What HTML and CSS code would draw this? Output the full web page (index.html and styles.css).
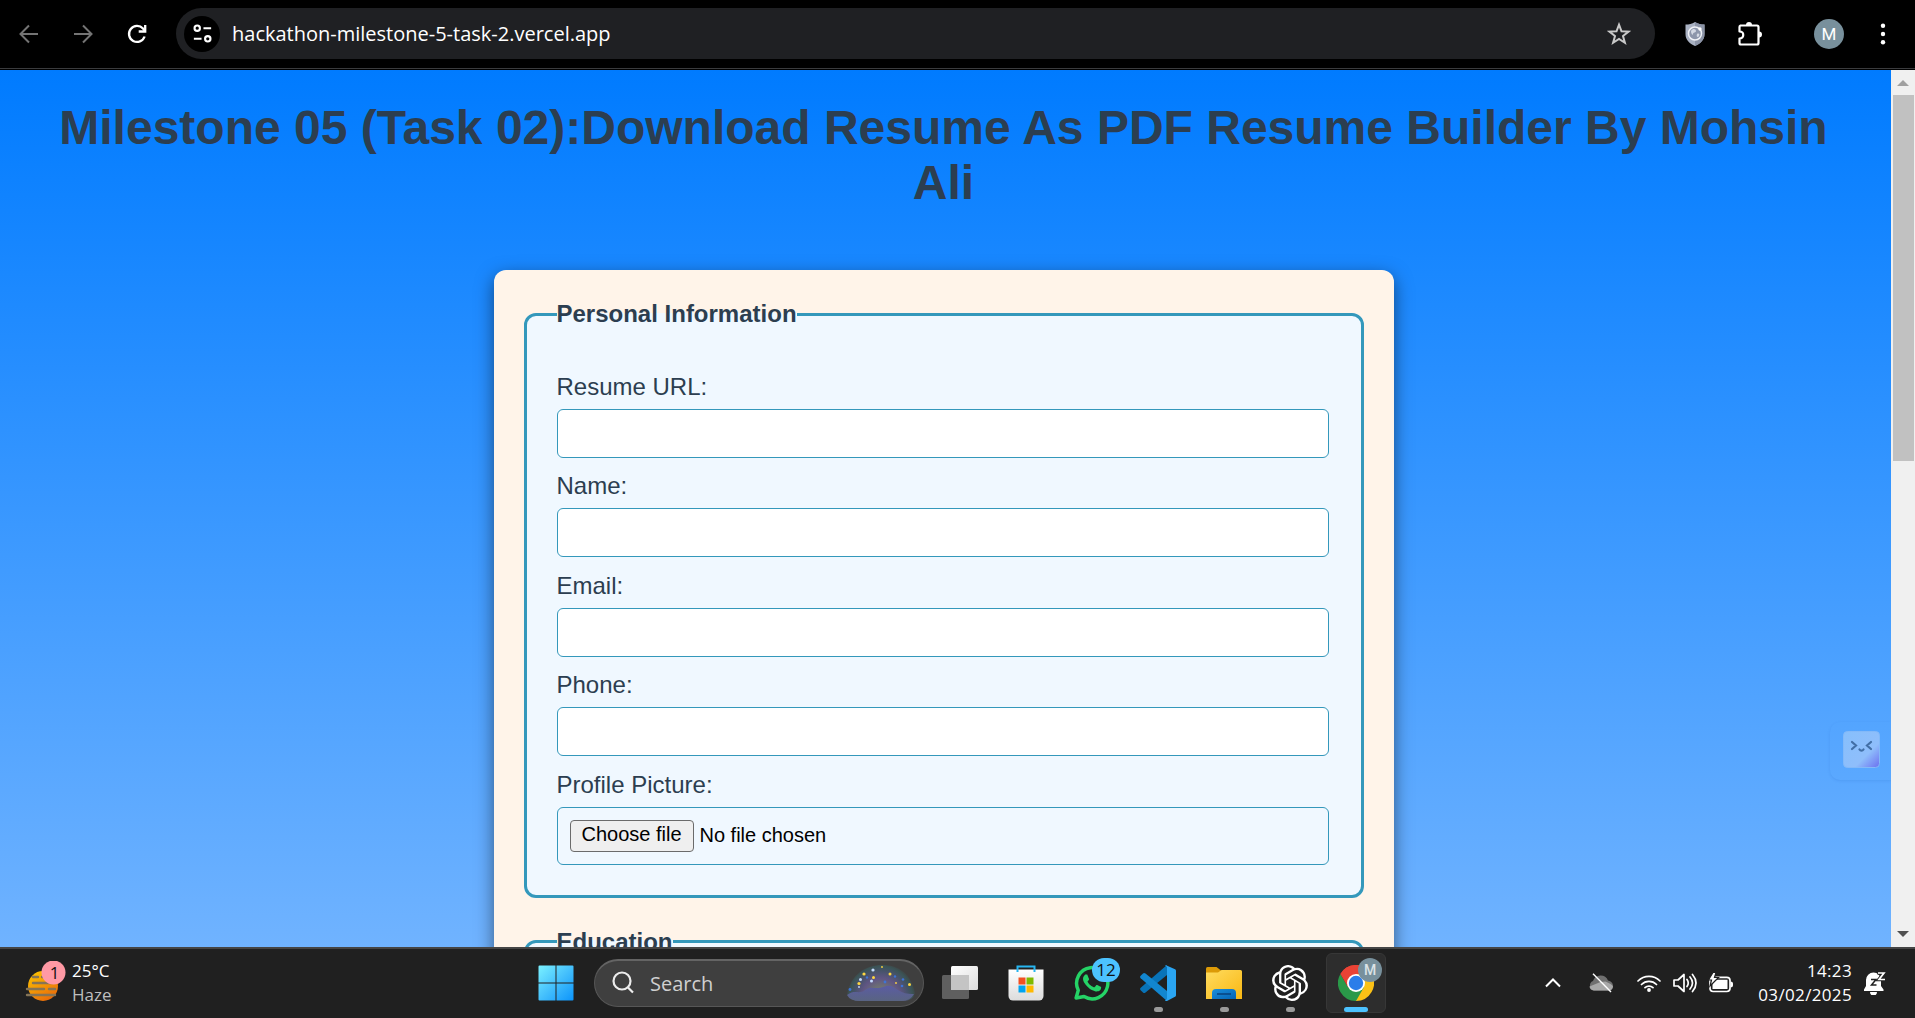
FILE: index.html
```html
<!DOCTYPE html>
<html lang="en">
<head>
<meta charset="utf-8">
<title>Resume Builder</title>
<link rel="stylesheet" href="styles.css">
</head>
<body>
<div class="screen">
  <header class="toolbar">
    <svg class="nav-icon dim" viewBox="0 0 24 24"><path d="M21 12H4M12 3.5 3.5 12l8.5 8.5"/></svg>
    <svg class="nav-icon dim" viewBox="0 0 24 24"><path d="M3 12h17M12 3.5 20.500 12 12 20.500"/></svg>
    <svg class="nav-icon reload" viewBox="0 0 24 24"><path d="M19.600 14.500A8 8 0 1 1 18 6.600L20 9"/><path d="M20.200 3v6.500h-6.500"/></svg>
    <div class="omnibox">
      <span class="site-info"><svg viewBox="0 0 24 24"><circle cx="6.500" cy="6.500" r="2.800"/><path d="M13 6.500h8M3 17.500h8"/><circle cx="17.500" cy="17.500" r="2.800"/></svg></span>
      <span class="url">hackathon-milestone-5-task-2.vercel.app</span>
      <svg class="star" viewBox="0 0 24 24"><path d="m12 2.700 2.500 6.600 7 .3-5.500 4.400 1.900 6.800-5.900-3.900-5.900 3.900L8 14 2.500 9.600l7-.3z"/></svg>
    </div>
    <svg class="shield" viewBox="0 0 20 24"><path d="M10 0c3 2 6 2.500 9.500 2.500V12c0 6-4 9.500-9.500 12C4.500 21.500.5 18 .5 12V2.500C4 2.500 7 2 10 0z" fill="#a9b1c2"/><path d="M10 0c3 2 6 2.500 9.500 2.500V12c0 6-4 9.500-9.500 12z" fill="#8b93a6"/><circle cx="10" cy="11.500" r="6.500" fill="#8d96ab" stroke="#f0f2f7" stroke-width="1.500"/><path d="M6 9c2-3 5-2 5 0s-3 1-3 3-2 0-2-3zm6 3c2-1 3 0 2 2s-3 1-2-2z" fill="#d4d9e4"/><circle cx="15" cy="7" r="1.700" fill="#fff"/></svg>
    <svg class="puzzle" viewBox="0 0 26 26"><path d="M3.500 4.500h16.500a1.500 1.500 0 0 1 1.500 1.500v16a1.500 1.500 0 0 1-1.500 1.500H4A1.500 1.500 0 0 1 2.500 22v-4.500c5 0 5-7 0-7V6a1.500 1.500 0 0 1 1-1.500z" fill="none" stroke="#fff" stroke-width="2.200" stroke-linejoin="round"/><path d="M9 4a3 3 0 0 1 6 0zM22 10.500a3 3 0 0 1 0 6z" fill="#fff"/></svg>
    <span class="avatar">M</span>
    <svg class="dots" viewBox="0 0 6 24"><circle cx="3" cy="3.700" r="2.200"/><circle cx="3" cy="12" r="2.200"/><circle cx="3" cy="20.300" r="2.200"/></svg>
  </header>

  <div class="viewport">
    <main class="page">
      <h1 class="title">Milestone 05 (Task 02):Download Resume As PDF Resume Builder By Mohsin Ali</h1>
      <form class="card">
        <fieldset class="group">
          <legend>Personal Information</legend>
          <div class="field"><label for="url">Resume URL:</label><input id="url" type="text"></div>
          <div class="field"><label for="name">Name:</label><input id="name" type="text"></div>
          <div class="field"><label for="email">Email:</label><input id="email" type="email"></div>
          <div class="field"><label for="phone">Phone:</label><input id="phone" type="tel"></div>
          <div class="field"><label>Profile Picture:</label>
            <div class="file"><button type="button">Choose file</button><span>No file chosen</span></div>
          </div>
        </fieldset>
        <fieldset class="group">
          <legend>Education</legend>
          <div class="field"></div>
        </fieldset>
      </form>
      <div class="widget">
        <svg viewBox="0 0 37 37"><defs><linearGradient id="face" x1="0" y1="0" x2="1" y2="1"><stop offset="0" stop-color="#86bffc"/><stop offset=".65" stop-color="#8fbefb"/><stop offset="1" stop-color="#6b6ff0"/></linearGradient></defs><rect x=".5" y=".5" width="36" height="36" rx="4" fill="url(#face)" stroke="#83b9f8"/><path d="m9 11 4 3.500L9 18M28 11l-4 3.500 4 3.500M16.500 18.500c1 1.500 3 1.500 4 0" fill="none" stroke="#426fa6" stroke-width="2.200" stroke-linecap="round"/></svg>
      </div>
    </main>
    <div class="scrollbar">
      <svg class="arrow" viewBox="0 0 12 6"><path d="M0 6 6 0l6 6z" fill="#a0a0a0"/></svg>
      <div class="thumb"></div>
      <svg class="arrow down" viewBox="0 0 12 6"><path d="m0 0 6 6 6-6z" fill="#505050"/></svg>
    </div>
  </div>

  <footer class="taskbar">
    <div class="weather">
      <svg viewBox="0 0 42 42"><defs><linearGradient id="sun" x1=".2" y1="0" x2=".8" y2="1"><stop offset="0" stop-color="#fcc200"/><stop offset="1" stop-color="#e8650a"/></linearGradient></defs><circle cx="18" cy="25" r="15" fill="url(#sun)"/><path d="M8 16h5M17 16h3M8 22h20M2 28h17M24 28h6M2 34h28" stroke="#857456" stroke-width="2.400" stroke-linecap="round"/><circle cx="28.500" cy="11.500" r="12" fill="#ff99a4"/><text x="29.500" y="17.500" text-anchor="middle" class="badge-text">1</text></svg>
      <div class="weather-text"><span>25°C</span><span class="muted">Haze</span></div>
    </div>
    <div class="app"><svg viewBox="0 0 36 36"><defs><linearGradient id="win" gradientUnits="userSpaceOnUse" x1="0" y1="0" x2="36" y2="36"><stop offset="0" stop-color="#7df3ff"/><stop offset=".5" stop-color="#45c0fc"/><stop offset="1" stop-color="#0a93fb"/></linearGradient></defs><path d="M1.500.5H17.500V17.500H.5V1.500a1 1 0 0 1 1-1zM18.500.5h16a1 1 0 0 1 1 1v16h-17zM.5 18.500h17v17h-16a1 1 0 0 1-1-1zM18.500 18.500h17v16a1 1 0 0 1-1 1h-16z" fill="url(#win)"/></svg></div>
    <div class="search">
      <svg class="lens" viewBox="0 0 24 24"><circle cx="10.500" cy="10" r="8.500"/><path d="m16.500 16.500 5 5"/></svg>
      <span>Search</span>
      <svg class="galaxy" viewBox="0 0 70 36"><defs><radialGradient id="sky" gradientUnits="userSpaceOnUse" cx="0" cy="0" r="36" gradientTransform="translate(35 33)"><stop offset="0" stop-color="#7d8668"/><stop offset=".3" stop-color="#6f7372"/><stop offset=".55" stop-color="#5f5583"/><stop offset=".75" stop-color="#47536a"/><stop offset=".88" stop-color="#3b5456"/><stop offset="1" stop-color="#3f3f3f"/></radialGradient><linearGradient id="hill" x1="0" y1="0" x2="0" y2="1"><stop offset="0" stop-color="#5b5ca2"/><stop offset="1" stop-color="#596482"/></linearGradient></defs><path d="M1 29C5 9 20 0 36 0s29 8 33 28q-2 8-12 8H14Q4 36 1 29z" fill="url(#sky)"/><path d="M1 30c8-6 12 0 18-5s10 0 18-3 10 0 15 3 8 4 16 4q-4 7-12 7H14Q4 36 1 30z" fill="url(#hill)"/><g fill="#ffd740"><circle cx="18" cy="9" r="1.600"/><circle cx="13" cy="18.500" r="1.600"/><circle cx="27.500" cy="12.500" r="1.500"/><circle cx="44" cy="9" r="1.500"/><circle cx="63.500" cy="19.500" r="1.500"/><circle cx="36" cy="2" r=".9"/><circle cx="50" cy="18" r=".9"/></g><g fill="#c5dcff"><circle cx="27" cy="5" r="1.600"/><circle cx="14.500" cy="14.500" r="1.500"/><circle cx="25.500" cy="16" r="1.500"/><circle cx="13" cy="22" r=".9"/></g><g fill="#3d74d6"><circle cx="4" cy="24.500" r="1.400"/><circle cx="21" cy="12.500" r="1.200"/><circle cx="39" cy="17" r="1.400"/><circle cx="49" cy="11.500" r="1.200"/><circle cx="57" cy="14.500" r="1.300"/><circle cx="56" cy="21" r="1.300"/></g></svg>
    </div>
    <div class="app"><svg viewBox="0 0 36 36"><defs><linearGradient id="tv" x1="0" y1="0" x2="1" y2="1"><stop offset="0" stop-color="#fff"/><stop offset="1" stop-color="#dcdcdc"/></linearGradient></defs><rect x="9" y="1" width="27" height="24" rx="1.500" fill="url(#tv)"/><rect x="0" y="10" width="27" height="24" rx="1.500" fill="#777" fill-opacity=".72"/><path d="M9 10h18v15H9z" fill="#c4c4c4"/></svg></div>
    <div class="app"><svg viewBox="0 0 36 36"><defs><linearGradient id="bag" x1="0" y1="0" x2="0" y2="1"><stop offset="0" stop-color="#fff"/><stop offset="1" stop-color="#dcdcdc"/></linearGradient></defs><path d="M.5 4.500h35V31a4.500 4.500 0 0 1-4.500 4.500H5A4.500 4.500 0 0 1 .5 31z" fill="url(#bag)"/><path d="M9.500 7V1.500h17V7" fill="none" stroke="#27b5f0" stroke-width="2"/><path d="M10.500 12.500h7v7h-7z" fill="#f25022"/><path d="M18.500 12.500h7v7h-7z" fill="#7fba00"/><path d="M10.500 20.500h7v7h-7z" fill="#00a4ef"/><path d="M18.500 20.500h7v7h-7z" fill="#ffb900"/></svg></div>
    <div class="app"><svg viewBox="0 0 24 24"><path fill="#25d366" d="M17.472 14.382c-.297-.149-1.758-.867-2.030-.967-.273-.099-.471-.148-.670.150-.197.297-.767.966-.940 1.164-.173.199-.347.223-.644.075-.297-.150-1.255-.463-2.390-1.475-.883-.788-1.480-1.761-1.653-2.059-.173-.297-.018-.458.130-.606.134-.133.298-.347.446-.520.149-.174.198-.298.298-.497.099-.198.050-.371-.025-.520-.075-.149-.669-1.612-.916-2.207-.242-.579-.487-.500-.669-.510-.173-.008-.371-.010-.570-.010-.198 0-.520.074-.792.372-.272.297-1.040 1.016-1.040 2.479 0 1.462 1.065 2.875 1.213 3.074.149.198 2.096 3.200 5.077 4.487.709.306 1.262.489 1.694.625.712.227 1.360.195 1.871.118.571-.085 1.758-.719 2.006-1.413.248-.694.248-1.289.173-1.413-.074-.124-.272-.198-.570-.347z"/><path d="M2 22l1.450-5.200A10.400 10.400 0 1 1 7.300 21z" transform="translate(-.6 0)" fill="none" stroke="#25d366" stroke-width="2.300" stroke-linejoin="round"/></svg><span class="count">12</span></div>
    <div class="app running"><svg viewBox="0 0 36 36"><path d="M27 0v10L5.500 27.500c-1 .8-1.800.6-2.500 0L.7 25.300c-.8-.8-.8-1.700 0-2.500z" fill="#0873b8"/><path d="M27 36V26L5.500 8.500C4.500 7.700 3.700 7.900 3 8.500L.7 10.700c-.8.8-.8 1.700 0 2.500z" fill="#1286cf"/><path d="M26 .3 34.500 4c1 .4 1.500 1 1.500 2v24c0 1-.5 1.600-1.500 2L27 36c-1 .3-1.500 0-2-.4l2-1.600V2l-2-1.600z" fill="#2aa5f2"/></svg></div>
    <div class="app running"><svg viewBox="0 0 36 36"><defs><linearGradient id="fold" x1="0" y1="0" x2="1" y2="1"><stop offset="0" stop-color="#ffdc60"/><stop offset="1" stop-color="#f9b712"/></linearGradient><linearGradient id="dock" x1="0" y1="0" x2="1" y2="1"><stop offset="0" stop-color="#1a8fdc"/><stop offset="1" stop-color="#0563b3"/></linearGradient></defs><path d="M0 3.500Q0 2 1.500 2h9L15 5.500V9H0z" fill="#dc9a07"/><path d="M0 7.500h12L15.500 5h19Q36 5 36 6.500V34H0z" fill="url(#fold)"/><path d="M6 34v-6q0-4 4-4h16q4 0 4 4v6z" fill="url(#dock)"/><path d="M11 29h14" stroke="#08427c" stroke-width="1.500"/></svg></div>
    <div class="app running"><svg viewBox="0 0 24 24"><path fill="#fff" d="M22.2819 9.8211a5.9847 5.9847 0 0 0-.5157-4.9108 6.0462 6.0462 0 0 0-6.5098-2.9A6.0651 6.0651 0 0 0 4.9807 4.1818a5.9847 5.9847 0 0 0-3.9977 2.9 6.0462 6.0462 0 0 0 .7427 7.0966 5.98 5.98 0 0 0 .511 4.9107 6.051 6.051 0 0 0 6.5146 2.9001A5.9847 5.9847 0 0 0 13.2599 24a6.0557 6.0557 0 0 0 5.7718-4.2058 5.9894 5.9894 0 0 0 3.9977-2.9001 6.0557 6.0557 0 0 0-.7475-7.0729zm-9.022 12.6081a4.4755 4.4755 0 0 1-2.8764-1.0408l.1419-.0804 4.7783-2.7582a.7948.7948 0 0 0 .3927-.6813v-6.7369l2.02 1.1686a.071.071 0 0 1 .038.052v5.5826a4.504 4.504 0 0 1-4.4945 4.4944zm-9.6607-4.1254a4.4708 4.4708 0 0 1-.5346-3.0137l.142.0852 4.783 2.7582a.7712.7712 0 0 0 .7806 0l5.8428-3.3685v2.3324a.0804.0804 0 0 1-.0332.0615L9.74 19.9502a4.4992 4.4992 0 0 1-6.1408-1.6464zM2.3408 7.8956a4.485 4.485 0 0 1 2.3655-1.9728V11.6a.7664.7664 0 0 0 .3879.6765l5.8144 3.3543-2.0201 1.1685a.0757.0757 0 0 1-.071 0l-4.8303-2.7865A4.504 4.504 0 0 1 2.3408 7.872zm16.5963 3.8558L13.1038 8.364 15.1192 7.2a.0757.0757 0 0 1 .071 0l4.8303 2.7913a4.4944 4.4944 0 0 1-.6765 8.1042v-5.6772a.79.79 0 0 0-.407-.667zm2.0107-3.0231l-.142-.0852-4.7735-2.7818a.7759.7759 0 0 0-.7854 0L9.409 9.2297V6.8974a.0662.0662 0 0 1 .0284-.0615l4.8303-2.7866a4.4992 4.4992 0 0 1 6.6802 4.66zM8.3065 12.863l-2.02-1.1638a.0804.0804 0 0 1-.038-.0567V6.0742a4.4992 4.4992 0 0 1 7.3757-3.4537l-.142.0805L8.704 5.459a.7948.7948 0 0 0-.3927.6813zm1.0976-2.3654l2.602-1.4998 2.6069 1.4998v2.9994l-2.5974 1.4997-2.6067-1.4997Z"/></svg></div>
    <div class="app running active"><svg viewBox="0 0 36 36"><path d="M18 18 2.400 9A18 18 0 0 1 33.600 9z" fill="#ea4335"/><path d="M18 18v-9h15.600A18 18 0 0 1 18 36z" fill="#fbc116"/><path d="M2.400 9A18 18 0 0 0 18 36l7.800-13.500L18 18l-7.800 4.500z" fill="#2a9949"/><path d="M18 9h15.600A18 18 0 0 0 2.400 9l7.800 13.500z" fill="#ea4335"/><circle cx="18" cy="18" r="9" fill="#fff"/><circle cx="18" cy="18" r="7.200" fill="#2b7de9"/></svg><span class="profile">M</span></div>
    <div class="tray">
      <svg class="chev" viewBox="0 0 16 10"><path d="m1 8.500 7-7 7 7" fill="none" stroke="#fff" stroke-width="2"/></svg>
      <svg class="cloud" viewBox="0 0 24 20"><path d="M5 17.500A5 5 0 0 1 4 8a8 8 0 0 1 15-.5q5 1 5 5.500-.5 4.500-4.500 4.500z" fill="#707070"/><path d="M4.500 17.500Q1 17 .5 13.500l11-4.500 5-.5q7 3 7.500 5-.5 4-4.500 4z" fill="#a8a8a8"/><path d="M4 .7 22 19" stroke="#fff" stroke-width="1.400"/></svg>
      <svg class="wifi" viewBox="0 0 24 18"><path d="M1 7a15.500 15.500 0 0 1 22 0M4.500 10.500a10.500 10.500 0 0 1 15 0M8 13.700a5.700 5.700 0 0 1 8 0" fill="none" stroke="#fff" stroke-width="1.700" stroke-linecap="round"/><circle cx="12" cy="16" r="1.900" fill="#fff"/></svg>
      <svg class="speaker" viewBox="0 0 24 20"><path d="M1 7h4l6-5.500v17L5 13H1zM14 6.500q2.500 3.500 0 7M17 4q5 6 0 12M19.500 1.500q7 8.500 0 17" fill="none" stroke="#fff" stroke-width="1.700" stroke-linecap="round" stroke-linejoin="round"/></svg>
      <svg class="battery" viewBox="0 0 24 20"><rect x="1" y="4.300" width="20" height="14.200" rx="3.200" fill="none" stroke="#fff" stroke-width="1.700"/><path d="M3.500 6.800h15v9.200h-15zM21.500 8.500q2.500 0 2.500 2v2q0 2-2.500 2z" fill="#fff"/><path d="M4 -.5-.5 7h3l-1.500 6L9.500 4.500h-4L7 -.5z" fill="#fff" stroke="#202020" stroke-width="1.200"/></svg>
      <div class="clock"><span>14:23</span><span>03/02/2025</span></div>
      <svg class="bell" viewBox="0 0 22 24"><path d="M0 18.500 2 15V9a7 7 0 0 1 15 0v6l2.500 3.500V20H0zM6 21h7a3.500 3.500 0 0 1-7 0z" fill="#fff"/><path d="M13.500 2h6.500l-5 6.500h6" fill="none" stroke="#202020" stroke-width="3.600"/><path d="M14 2h6l-5 6.500h6" fill="none" stroke="#fff" stroke-width="1.700"/><path d="M7 8.500h5L7.500 14h5" fill="none" stroke="#202020" stroke-width="1.500"/></svg>
    </div>
  </footer>
</div>
</body>
</html>
```
FILE: styles.css
```css
* { box-sizing: border-box; }
body {
  margin: 0;
  font-family: "Liberation Sans", Arial, sans-serif;
  overflow: hidden;
}
svg { display: block; flex: none; }
.screen {
  width: 1915px;
  height: 1018px;
  display: flex;
  flex-direction: column;
}

/* Browser toolbar */
.toolbar {
  height: 70px;
  flex: none;
  display: flex;
  align-items: center;
  padding: 0 0 2px 17px;
  background: #000;
  border-bottom: 1px solid #000;
  box-shadow: inset 0 -1px #3a3b3d;
  font-family: "Open Sans", sans-serif;
}
.nav-icon {
  width: 24px;
  height: 24px;
  margin-right: 30px;
  fill: none;
  stroke: #fff;
  stroke-width: 2.3;
}
.nav-icon.dim { stroke: #747474; stroke-width: 2; }
.nav-icon.reload { margin-right: 27px; }
.omnibox {
  width: 1479px;
  height: 51px;
  flex: none;
  display: flex;
  align-items: center;
  padding: 0 24px 0 8px;
  border-radius: 26px;
  background: #1f2023;
}
.site-info {
  width: 36px;
  height: 36px;
  display: grid;
  place-items: center;
  border-radius: 50%;
  background: #000;
}
.site-info svg {
  width: 23px;
  height: 23px;
  fill: none;
  stroke: #fff;
  stroke-width: 2.2;
}
.url {
  margin-left: 12px;
  font-size: 20px;
  line-height: 28px;
  color: #fff;
}
.star {
  width: 24px;
  height: 24px;
  margin-left: auto;
  fill: none;
  stroke: #c9c9c9;
  stroke-width: 2;
}
.shield { width: 20px; height: 24px; margin-left: 30px; }
.puzzle { width: 26px; height: 26px; margin-left: 32px; }
.avatar {
  width: 30px;
  height: 30px;
  margin-left: 51px;
  border-radius: 50%;
  background: #78909c;
  color: #fff;
  font: 400 17px/31px Roboto, sans-serif;
  text-align: center;
}
.dots { width: 6px; height: 24px; margin-left: 36px; fill: #fff; }

/* Page */
.viewport { height: 877px; flex: none; display: flex; }
.page {
  position: relative;
  width: 1891px;
  padding-right: 4px;
  overflow: hidden;
  background: linear-gradient(#007bff, #70b3ff);
  color: #2c3e50;
}
.title {
  margin: 30px 30px 60px;
  font-size: 48px;
  line-height: 55px;
  text-align: center;
}
.card {
  width: 900px;
  margin: 0 auto;
  padding: 30px;
  border-radius: 12px;
  background: #fff4e9;
  box-shadow: 0 6px 18px rgba(0, 0, 0, 0.5);
}
.group {
  margin: 0 0 30px;
  padding: 30px;
  border: 3px solid #3498bb;
  border-radius: 12px;
  background: #f0f8ff;
}
.group legend {
  padding: 0;
  font-size: 24px;
  line-height: 28px;
  font-weight: bold;
}
.field {
  display: flex;
  flex-direction: column;
  padding-top: 14px;
  margin-bottom: 0.4px;
  font-size: 24px;
}
.group legend + .field { padding-top: 15px; }
.field:last-child { margin-bottom: 0; }
.field label { line-height: 27px; margin-bottom: 9px; }
.field input, .file {
  width: 772px;
  height: 49px;
  padding: 12px;
  border: 1px solid #3498bb;
  border-radius: 6px;
  background: #fff;
}
.file {
  height: 58px;
  display: flex;
  align-items: center;
  gap: 6px;
  background: transparent;
  color: #000;
  font-size: 20px;
}
.file button {
  width: 124px;
  height: 32px;
  padding: 0 0 2px;
  border: 1px solid #6b6b6b;
  border-radius: 4px;
  background: #efefef;
  color: #000;
  font: 20px "Liberation Sans", Arial, sans-serif;
}
.widget {
  position: absolute;
  right: 0;
  top: 652px;
  width: 61px;
  height: 58px;
  padding: 9px 0 0 13px;
  border-radius: 10px 0 0 10px;
  box-shadow: 0 1px 3px rgba(30, 90, 180, 0.15);
}
.widget svg { width: 37px; height: 37px; }

.scrollbar {
  width: 24px;
  display: flex;
  flex-direction: column;
  align-items: center;
  padding: 10px 0;
  background: #f0f0f0;
}
.arrow { width: 12px; height: 6px; }
.thumb { width: 21px; height: 366px; margin-top: 9px; background: #c1c1c1; }
.arrow.down { margin-top: auto; }

/* Taskbar */
.taskbar {
  height: 71px;
  flex: none;
  display: flex;
  align-items: center;
  padding-bottom: 2px;
  border-top: 2px solid #454545;
  background: #202020;
  color: #fff;
  font-family: "Open Sans", sans-serif;
  font-size: 18px;
}
.weather {
  width: 523px;
  display: flex;
  padding-left: 25px;
}
.weather svg { width: 42px; height: 42px; margin-top: 2px; }
.badge-text { font-size: 17px; fill: #111; }
.weather-text, .clock {
  display: flex;
  flex-direction: column;
  line-height: 24px;
}
.weather-text { margin-left: 5px; font-size: 17px; }
.muted { color: #bebebe; }
.app {
  position: relative;
  width: 66px;
  height: 60px;
  flex: none;
  display: grid;
  place-items: center;
}
.app > svg { width: 36px; height: 36px; z-index: 1; }
.search {
  width: 330px;
  height: 48px;
  display: flex;
  align-items: center;
  margin: 0 3px 0 5px;
  padding: 0 7px 0 16px;
  border: 1px solid #575757;
  border-top: 2px solid #646464;
  border-radius: 24px;
  background: #3f3f3f;
  color: #d0d0d0;
  font-size: 20px;
}
.lens {
  width: 25px;
  height: 24px;
  margin-right: 14px;
  fill: none;
  stroke: #ececec;
  stroke-width: 2.2;
}
.galaxy { width: 70px; height: 36px; margin-left: auto; }
.running::after {
  content: "";
  position: absolute;
  bottom: 1px;
  width: 9px;
  height: 5px;
  border-radius: 3px;
  background: #9a9a9a;
}
.active::before {
  content: "";
  position: absolute;
  inset: 0 3px;
  border: 1px solid #373737;
  border-radius: 6px;
  background: #2d2d2d;
}
.active::after { width: 24px; background: #4cc2ff; }
.count, .profile {
  position: absolute;
  z-index: 2;
  top: 5px;
  left: 33px;
  width: 28px;
  height: 24px;
  border-radius: 12px;
  background: #4cc2ff;
  color: #111;
  font-size: 17px;
  line-height: 24px;
  text-align: center;
}
.profile {
  left: 35px;
  width: 24px;
  background: #78909c;
  color: #dce3e6;
  font: 500 14px/24px Roboto, sans-serif;
}
.tray { display: flex; align-items: center; margin-left: auto; padding-right: 29px; }
.chev { width: 16px; height: 10px; margin-right: 28px; }
.cloud { width: 24px; height: 20px; margin-right: 24px; }
.wifi { width: 24px; height: 18px; margin-right: 12px; }
.speaker { width: 24px; height: 20px; margin-right: 12px; }
.battery { width: 24px; height: 20px; overflow: visible; }
.clock { width: 119px; text-align: right; font-size: 17px; letter-spacing: 0.35px; }
.bell { width: 22px; height: 24px; margin-left: 12px; }
```
